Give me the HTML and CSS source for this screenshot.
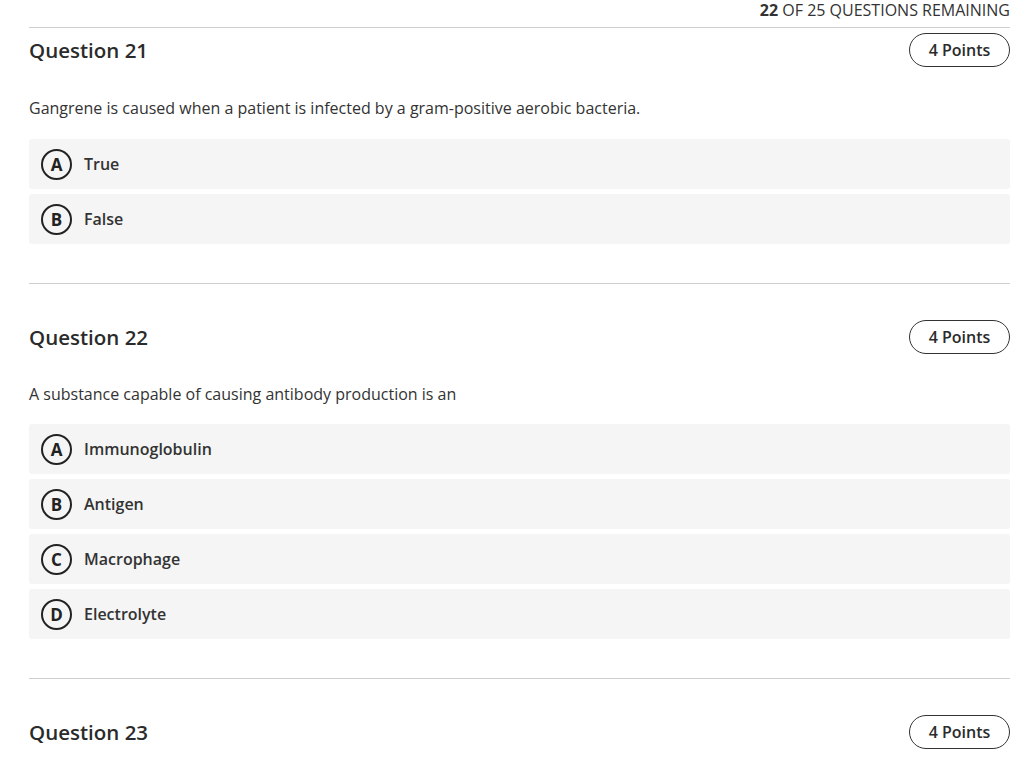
FILE: index.html
```html
<!DOCTYPE html>
<html lang="en">
<head>
<meta charset="utf-8">
<title>Quiz</title>
<link rel="stylesheet" href="styles.css">
</head>
<body>
<main class="quiz">
  <div class="counter"><strong>22</strong> OF 25 QUESTIONS REMAINING</div>

  <section class="question first">
    <div class="q-head">
      <h2 class="q-title">Question 21</h2>
      <span class="points">4 Points</span>
    </div>
    <p class="q-text">Gangrene is caused when a patient is infected by a gram-positive aerobic bacteria.</p>
    <ul class="options">
      <li class="option"><span class="letter">A</span><span class="label">True</span></li>
      <li class="option"><span class="letter">B</span><span class="label">False</span></li>
    </ul>
  </section>

  <section class="question">
    <div class="q-head">
      <h2 class="q-title">Question 22</h2>
      <span class="points">4 Points</span>
    </div>
    <p class="q-text">A substance capable of causing antibody production is an</p>
    <ul class="options">
      <li class="option"><span class="letter">A</span><span class="label">Immunoglobulin</span></li>
      <li class="option"><span class="letter">B</span><span class="label">Antigen</span></li>
      <li class="option"><span class="letter">C</span><span class="label">Macrophage</span></li>
      <li class="option"><span class="letter">D</span><span class="label">Electrolyte</span></li>
    </ul>
  </section>

  <section class="question">
    <div class="q-head">
      <h2 class="q-title">Question 23</h2>
      <span class="points">4 Points</span>
    </div>
  </section>
</main>
</body>
</html>
```

FILE: styles.css
```css
html, body {
  margin: 0;
  padding: 0;
  background: #ffffff;
}

body {
  font-family: "Open Sans", "Noto Sans", sans-serif;
  color: #2b2b2b;
  overflow: hidden;
}

.quiz {
  margin-left: 29px;
  width: 981px;
}

.counter {
  height: 27px;
  line-height: 20px;
  text-align: right;
  font-size: 16px;
  color: #333;
  border-bottom: 1px solid #cfcfcf;
}

.counter strong {
  font-weight: 700;
}

.question {
  padding-top: 36px;
  padding-bottom: 39px;
  border-bottom: 1px solid #cfcfcf;
}

.question.first {
  padding-top: 5px;
}

.q-head {
  display: flex;
  justify-content: space-between;
  align-items: center;
  height: 34px;
}

.q-title {
  margin: 0;
  font-size: 20.5px;
  font-weight: 600;
  color: #2b2b2b;
  line-height: 28px;
}

.points {
  box-sizing: border-box;
  width: 101px;
  height: 34px;
  border: 1px solid #333;
  border-radius: 17px;
  display: flex;
  align-items: center;
  justify-content: center;
  font-size: 16px;
  font-weight: 600;
  color: #2b2b2b;
}

.q-text {
  margin: 28px 0 18px;
  font-size: 16px;
  line-height: 24px;
  color: #333;
}

.question.first .q-text {
  margin: 29px 0 19px;
}

.options {
  list-style: none;
  margin: 0;
  padding: 0;
  display: flex;
  flex-direction: column;
  gap: 5px;
}

.option {
  height: 50px;
  background: #f5f5f5;
  border-radius: 3px;
  display: flex;
  align-items: center;
  padding-left: 12px;
  gap: 12px;
}

.letter {
  box-sizing: border-box;
  width: 31px;
  height: 31px;
  border: 2px solid #222;
  border-radius: 50%;
  display: flex;
  align-items: center;
  justify-content: center;
  font-size: 17px;
  line-height: 1;
  font-weight: 700;
  color: #222;
}

.label {
  font-size: 16px;
  font-weight: 600;
  color: #333;
}
```
